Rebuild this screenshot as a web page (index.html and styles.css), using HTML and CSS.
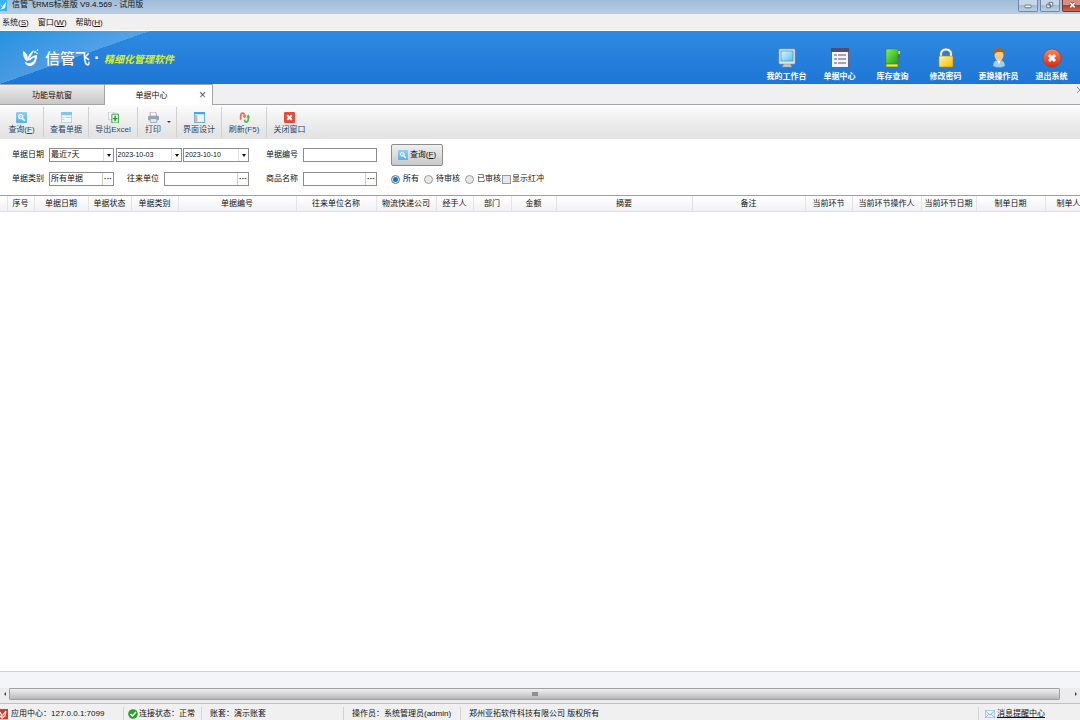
FILE: index.html
```html
<!DOCTYPE html>
<html lang="zh-CN">
<head>
    <meta charset="UTF-8">
    <meta name="viewport" content="width=device-width, initial-scale=1.0">
    <title>信管飞RMS标准版 V9.4.569 - 试用版</title>
    <link rel="stylesheet" href="styles.css">
</head>
<body>
    <svg class="defs" width="0" height="0">
        <defs>
            <linearGradient id="blue" x1="0" y1="0" x2="0" y2="1"><stop offset="0" stop-color="#8cd0f8"/><stop offset="1" stop-color="#58b0ec"/></linearGradient>
            <linearGradient id="screen" x1="0" y1="0" x2="1" y2="1"><stop offset="0" stop-color="#d4f6ff"/><stop offset="1" stop-color="#5cc0f4"/></linearGradient>
            <linearGradient id="green" x1="0" y1="0" x2="1" y2="1"><stop offset="0" stop-color="#8cf04c"/><stop offset="1" stop-color="#18a020"/></linearGradient>
            <linearGradient id="gold" x1="0" y1="0" x2="1" y2="1"><stop offset="0" stop-color="#fff6a0"/><stop offset="1" stop-color="#f8b800"/></linearGradient>
            <linearGradient id="red" x1="0" y1="0" x2="0" y2="1"><stop offset="0" stop-color="#f88860"/><stop offset="1" stop-color="#e02808"/></linearGradient>
            <symbol id="logo" viewBox="0 0 18 20">
                <path d="M1 3C4 4 5 6 6 9L5 14C2 11 1 8 1 3Z"/>
                <path d="M13 2C9 4 6 8 5 14L7 13C9 9 11 6 13 2Z"/>
                <path d="M16 7C11 8 8 10 7 13L9 13C10 11 12 10 14 10C13 14 11 16 7 16C5 16 4 15 3 14C3 17 6 19 9 19C14 18 16 13 16 7Z"/>
                <path d="M13 3h2v2h-2zM16 1h1v2h-1zM15 5h2v1h-2z"/>
            </symbol>
            <symbol id="search" viewBox="0 0 10 10">
                <rect width="10" height="10" rx="1" fill="url(#blue)"/>
                <circle cx="4.3" cy="4.2" r="1.9" fill="#9fd6f8" stroke="#fff"/>
                <path d="M5.8 5.8L8 8" stroke="#fff" stroke-width="1.4"/>
            </symbol>
        </defs>
    </svg>

    <header class="titlebar">
        <svg class="app-icon" viewBox="0 0 8 11"><path d="M0 0h7v11H0z" fill="#38b4ec"/><path d="M0 4L2 7L6 2L5 8L0 10L3 7Z" fill="#fff"/></svg>
        <span class="title">信管飞RMS标准版 V9.4.569 - 试用版</span>
        <div class="window-buttons">
            <button aria-label="最小化"><svg viewBox="0 0 20 12"><rect x="6.500" y="5.500" width="7" height="3" rx="1" fill="#fff" stroke="#58687c"/></svg></button>
            <button aria-label="还原"><svg viewBox="0 0 20 12"><path d="M9 2.500h4v4h-4zM6.500 4.500h4v4h-4z" fill="#fff" stroke="#58687c"/></svg></button>
            <button class="close" aria-label="关闭"><svg viewBox="0 0 20 12"><path d="M8 3l5 5M13 3l-5 5" stroke="#6c3030" stroke-width="3"/><path d="M8 3l5 5M13 3l-5 5" stroke="#fff" stroke-width="2"/></svg></button>
        </div>
    </header>

    <nav class="menubar">
        <a href="#">系统(<u>S</u>)</a>
        <a href="#">窗口(<u>W</u>)</a>
        <a href="#">帮助(<u>H</u>)</a>
    </nav>

    <div class="banner">
        <svg class="brand-logo" fill="#fff"><use href="#logo"/></svg>
        <span class="brand">信管飞</span>
        <span class="dot">·</span>
        <span class="slogan">精细化管理软件</span>
        <div class="shortcuts">
            <button>
                <svg viewBox="0 0 20 20"><path d="M7 16h6l2 3H5z" fill="#c8ccd0" stroke="#889098" stroke-width=".5"/><rect x="2" y="1" width="16" height="15" rx="1" fill="#e8e4dc" stroke="#a0a09c" stroke-width=".6"/><rect x="4" y="3" width="12" height="10" fill="url(#screen)" stroke="#3890c0" stroke-width=".7"/></svg>
                我的工作台
            </button>
            <button>
                <svg viewBox="0 0 20 20"><rect x="1.500" y=".5" width="17" height="19" fill="#f4f2fa" stroke="#686484"/><path d="M1 0h18v4H1z" fill="#504c70"/><path d="M4 7h3M4 11h3M4 15h3M8 7h8M8 11h8M8 15h8" stroke="#8c88a4" stroke-width="1.300"/></svg>
                单据中心
            </button>
            <button>
                <svg viewBox="0 0 20 20"><path d="M14 3h3v3h-3z" fill="#f8d020"/><path d="M14 7h3v3h-3z" fill="#e83020"/><path d="M14 11h3v4h-3z" fill="#5068c8"/><path d="M4 1h11v15H3V2z" fill="url(#green)" stroke="#189018" stroke-width=".5"/><path d="M3 16h12v3H3z" fill="#fce048" stroke="#409010" stroke-width=".7"/></svg>
                库存查询
            </button>
            <button>
                <svg viewBox="0 0 20 20"><path d="M5 10V6c0-6 10-6 10 0v4" fill="none" stroke="#6c7c94" stroke-width="3.200"/><path d="M5 10V6c0-6 10-6 10 0v4" fill="none" stroke="#f4f6f8" stroke-width="2"/><rect x="3" y="8" width="14" height="11" rx="1" fill="url(#gold)" stroke="#b88410" stroke-width=".6"/></svg>
                修改密码
            </button>
            <button>
                <svg viewBox="0 0 20 20"><path d="M4 18c0-5 3-6 6-6s6 1 6 6c-3 2-9 2-12 0z" fill="#a4ccf4" stroke="#4c80c0" stroke-width=".5"/><path d="M8 12l2 4 2-4z" fill="#fff"/><ellipse cx="10" cy="7" rx="4.500" ry="6" fill="#f8c888"/><path d="M5 7C3 2 7 0 10 0s7 2 5 7c0-3-2-3-5-3S6 5 5 7z" fill="#a86818"/></svg>
                更换操作员
            </button>
            <button>
                <svg viewBox="0 0 20 20"><circle cx="10" cy="10" r="9" fill="url(#red)" stroke="#c82810" stroke-width=".6"/><path d="M7 7l6 6M13 7l-6 6" stroke="#fff" stroke-width="3"/></svg>
                退出系统
            </button>
        </div>
    </div>

    <div class="tabs">
        <button class="tab">功能导航窗</button>
        <button class="tab active">单据中心<span class="tab-close">×</span></button>
        <button class="close-all" aria-label="关闭标签"><svg viewBox="0 0 3 6"><path d="M0 0l3 3L0 6" fill="none" stroke="#888"/></svg></button>
    </div>

    <div class="toolbar">
        <button>
            <svg><use href="#search"/></svg>
            查询(<u>F</u>)
        </button>
        <button>
            <svg viewBox="0 0 10 10"><rect x=".3" y=".3" width="9.400" height="9.400" fill="#f4fafe" stroke="#90c8ec" stroke-width=".6"/><path d="M0 0h10v3H0z" fill="#80c8f0"/><path d="M1 5h2M4 5h5M1 7h2" stroke="#a0d0ec" stroke-width=".8"/></svg>
            查看单据
        </button>
        <button class="wide">
            <svg viewBox="0 0 10 10"><path d="M.5 0h5v7h-5z" fill="#fff" stroke="#a8b8d0" stroke-width=".6"/><path d="M3.500 2h6v8h-6z" fill="#e4f8e0" stroke="#309838" stroke-width=".8"/><path d="M6.500 3.500v5M4.500 6h4" stroke="#209830" stroke-width="1.300"/></svg>
            导出Excel
        </button>
        <button class="narrow">
            <svg viewBox="0 0 10 10"><path d="M2 0h5l1 4H2z" fill="#f8f8fc" stroke="#8890a0" stroke-width=".6"/><rect y="3.500" width="10" height="4" rx="1" fill="#9ca4b4"/><path d="M2 6h6v3.500H2z" fill="#dce8f8" stroke="#8090a8" stroke-width=".6"/></svg>
            打印
            <span class="drop"></span>
        </button>
        <button>
            <svg viewBox="0 0 10 10"><rect x=".5" y=".5" width="9" height="9" fill="#e8f4fc" stroke="#70b4e8"/><path d="M0 0h10v2H0z" fill="#48a4e4"/><path d="M1 3h2v6H1z" fill="#f4b068"/></svg>
            界面设计
        </button>
        <button>
            <svg viewBox="0 0 10 10" fill="none"><path d="M1.500 7V4c0-4 3.500-3.500 3.500-1" stroke="#e87058" stroke-width="1.600"/><path d="M3 3h4L5 6z" fill="#e87058"/><path d="M8.500 4v2c0 4-3.500 4-3.500 1" stroke="#50b858" stroke-width="1.600"/><path d="M6.500 5H10L8.500 2z" fill="#50b858"/></svg>
            刷新(F5)
        </button>
        <button>
            <svg viewBox="0 0 10 10"><rect width="10" height="10" rx="1" fill="#e44c38"/><path d="M3 3l4 4M7 3L3 7" stroke="#fff" stroke-width="1.800"/></svg>
            关闭窗口
        </button>
    </div>

    <form class="filters" onsubmit="return false">
        <label for="range">单据日期</label>
        <div class="group">
            <span class="combo"><select id="range"><option>最近7天</option></select></span>
            <span class="combo date"><select aria-label="开始日期"><option>2023-10-03</option></select></span>
            <span class="combo date"><select aria-label="结束日期"><option>2023-10-10</option></select></span>
        </div>
        <label for="code">单据编号</label>
        <input class="box" type="text" id="code">
        <button class="query"><svg><use href="#search"/></svg>查询(<u>F</u>)</button>

        <label for="kind">单据类别</label>
        <div class="group">
            <span class="lookup kind"><input type="text" id="kind" value="所有单据"><button type="button" aria-label="选择类别">···</button></span>
            <label class="partner-label" for="partner">往来单位</label>
            <span class="lookup partner"><input type="text" id="partner"><button type="button" aria-label="选择单位">···</button></span>
        </div>
        <label for="goods">商品名称</label>
        <span class="lookup"><input type="text" id="goods"><button type="button" aria-label="选择商品">···</button></span>
        <div class="options">
            <label><input type="radio" name="state" checked>所有</label>
            <label><input type="radio" name="state">待审核</label>
            <label><input type="radio" name="state">已审核</label>
            <label><input type="checkbox">显示红冲</label>
        </div>
    </form>

    <main class="grid">
        <table>
            <colgroup>
                <col style="width:7px"><col style="width:27px"><col style="width:54px"><col style="width:43px"><col style="width:47px"><col style="width:118px">
                <col style="width:80px"><col style="width:60px"><col style="width:37px"><col style="width:38px"><col style="width:45px"><col style="width:136px">
                <col style="width:113px"><col style="width:47px"><col style="width:69px"><col style="width:55px"><col style="width:69px"><col style="width:47px">
            </colgroup>
            <thead>
                <tr>
                    <th></th><th>序号</th><th>单据日期</th><th>单据状态</th><th>单据类别</th><th>单据编号</th>
                    <th>往来单位名称</th><th>物流快递公司</th><th>经手人</th><th>部门</th><th>金额</th><th>摘要</th>
                    <th>备注</th><th>当前环节</th><th>当前环节操作人</th><th>当前环节日期</th><th>制单日期</th><th>制单人</th>
                </tr>
            </thead>
            <tbody></tbody>
        </table>
    </main>
    <div class="summary"></div>
    <div class="scrollbar">
        <button class="left" aria-label="向左"></button>
        <div class="thumb"><i></i></div>
        <button class="right" aria-label="向右"></button>
    </div>

    <footer class="statusbar">
        <span class="server"><svg viewBox="0 0 10 10"><path d="M0 0h8v10H0z" fill="#e03424"/><path d="M0 3l2 4 4-5-1 5-3 2-2-2" fill="none" stroke="#fff" stroke-width="1.200"/></svg>应用中心：127.0.0.1:7099</span>
        <span class="link"><svg viewBox="0 0 10 10"><circle cx="5" cy="5" r="4.800" fill="#28a028"/><path d="M2.500 5l2 2L8 3" fill="none" stroke="#fff" stroke-width="1.500"/></svg>连接状态：正常</span>
        <span class="account">账套：演示账套</span>
        <span class="operator">操作员：系统管理员(admin)</span>
        <span class="rights">郑州亚拓软件科技有限公司 版权所有</span>
        <span class="notice"><svg viewBox="0 0 10 10"><rect x=".3" y="1.300" width="9.400" height="7.400" fill="#e8f4fe" stroke="#80b4e4" stroke-width=".6"/><path d="M.5 2L5 6l4.500-4M.5 8.500L4 5M9.500 8.500L6 5" fill="none" stroke="#70a8e0" stroke-width=".7"/></svg><a href="#">消息提醒中心</a></span>
    </footer>
</body>
</html>
```
FILE: styles.css
```css
* {
    box-sizing: border-box;
}
body {
    margin: 0;
    min-height: 100vh;
    display: flex;
    flex-direction: column;
    overflow: hidden;
    background: #f0f0f0;
    color: #111;
    font-family: "Liberation Sans", "Noto Sans CJK SC", sans-serif;
    font-size: 8px;
    line-height: 12px;
    white-space: nowrap;
}
button, input, select {
    font: inherit;
    color: inherit;
    margin: 0;
    padding: 0;
    border: none;
    background: none;
    border-radius: 0;
}
a {
    color: inherit;
    text-decoration: none;
}
.defs {
    position: absolute;
}

/* title bar and menu */
.titlebar {
    display: flex;
    align-items: flex-start;
    height: 14px;
    background: linear-gradient(#a0bcd8, #b8cee4);
}
.app-icon {
    width: 8px;
    height: 11px;
}
.title {
    margin-left: 4px;
    line-height: 10px;
}
.window-buttons {
    display: flex;
    gap: 2px;
    margin-left: auto;
    margin-right: -2px;
}
.window-buttons button {
    width: 20px;
    height: 12px;
    border: 1px solid #7088a4;
    border-top: none;
    border-radius: 0 0 2px 2px;
    background: linear-gradient(#c4d6e8 45%, #a4bcd4 50%, #bcd0e4);
}
.window-buttons .close {
    border-color: #703838;
    background: linear-gradient(#d89084 45%, #b83c28 50%, #cc6850);
}
.window-buttons svg {
    display: block;
    width: 18px;
    height: 11px;
}
.menubar {
    display: flex;
    gap: 9px;
    height: 17px;
    padding: 3px 2px;
    border-bottom: 1px solid #fff;
}

/* blue banner */
.banner {
    display: flex;
    align-items: center;
    height: 53px;
    padding: 0 2px 0 22px;
    color: #fff;
    background:
        linear-gradient(to bottom right, rgba(30, 160, 220, 0.4), rgba(130, 195, 245, 0.45) 50%, transparent 50%) 0 0 / 150px 53px no-repeat,
        linear-gradient(#2e8ae2, #1e76d4);
}
.brand-logo {
    width: 17px;
    height: 19px;
}
.brand {
    margin-left: 6px;
    padding-top: 2px;
    font-size: 15px;
    line-height: 20px;
    font-weight: 500;
}
.dot {
    width: 14px;
    text-align: center;
    font-size: 16px;
    font-weight: bold;
}
.slogan {
    padding-top: 5px;
    font-size: 10px;
    font-style: italic;
    font-weight: bold;
    color: #d4f028;
}
.shortcuts {
    display: flex;
    margin-left: auto;
}
.shortcuts button {
    display: flex;
    flex-direction: column;
    align-items: center;
    width: 53px;
    padding-top: 15px;
    font-weight: bold;
}
.shortcuts svg {
    width: 20px;
    height: 20px;
    margin-bottom: 3px;
}

/* tabs */
.tabs {
    display: flex;
    height: 21px;
    border-bottom: 1px solid #a4a4a8;
}
.tab {
    width: 105px;
    height: 21px;
    padding-top: 2px;
    border: 1px solid #a4a4a8;
    border-left: none;
    background: linear-gradient(#ececec, #c8c8c8);
}
.tab.active {
    position: relative;
    width: 108px;
    padding-top: 1px;
    padding-right: 14px;
    border-bottom: none;
    background: #fff;
}
.tab-close {
    position: absolute;
    top: 4px;
    right: 6px;
    font-size: 12px;
    color: #555;
}
.close-all {
    align-self: flex-start;
    margin-left: auto;
    padding-top: 3px;
}
.close-all svg {
    display: block;
    width: 3px;
    height: 6px;
}

/* toolbar */
.toolbar {
    display: flex;
    height: 34px;
    background: linear-gradient(#fcfcfc, #e4e4e4 85%);
}
.toolbar button {
    position: relative;
    width: 45px;
    margin: 2px 0;
    padding-top: 4px;
    border-right: 1px solid #d0d0d0;
    color: #2c486c;
}
.toolbar button:first-child {
    width: 44px;
}
.toolbar button:last-child {
    border-right: none;
}
.toolbar .wide {
    width: 49px;
}
.toolbar .narrow {
    width: 39px;
    padding-right: 8px;
}
.toolbar svg {
    display: block;
    width: 11px;
    height: 11px;
    margin: 0 auto 1px;
}
.drop {
    position: absolute;
    top: 14px;
    right: 5px;
    border: 2px solid transparent;
    border-top-color: #2c3c54;
    border-bottom: none;
}

/* search form */
.filters {
    display: grid;
    grid-template-columns: 37px 200px 54px 74px 1fr;
    grid-template-rows: 24px 24px;
    align-items: center;
    height: 56px;
    padding: 4px 12px;
    background: #fff;
}
.group {
    display: flex;
    align-items: center;
    justify-content: space-between;
}
.group + label {
    padding-left: 17px;
}
.partner-label {
    padding-left: 8px;
}
.combo {
    position: relative;
    display: flex;
    width: 65px;
}
.date {
    width: 66px;
    font-size: 7px;
}
.combo select, .box, .lookup {
    width: 100%;
    height: 14px;
    border: 1px solid #8c8c8c;
    background: #fff;
}
.combo select {
    appearance: none;
    padding-left: 1px;
}
.combo::after {
    content: "";
    position: absolute;
    top: 6px;
    right: 3px;
    border: 2px solid transparent;
    border-top: 3px solid #111;
    border-bottom: none;
}
.combo::before {
    content: "";
    position: absolute;
    top: 1px;
    right: 10px;
    height: 12px;
    border-left: 1px solid #ddd;
}
.lookup {
    display: flex;
}
.lookup.kind {
    width: 65px;
}
.lookup.partner {
    width: 85px;
}
.lookup input {
    flex: 1;
    min-width: 0;
    padding-left: 1px;
}
.lookup button {
    width: 11px;
    border-left: 1px solid #ccc;
    font-weight: bold;
    line-height: 10px;
}
.query {
    display: flex;
    align-items: center;
    justify-content: center;
    width: 52px;
    height: 22px;
    margin-left: 14px;
    border: 1px solid #8c8c8c;
    border-radius: 2px;
    background: linear-gradient(#f0f0f0, #c8c8c8);
}
.query svg {
    width: 10px;
    height: 10px;
    margin-right: 2px;
}
.options {
    display: flex;
    gap: 5px;
    margin-left: 14px;
}
.options label {
    display: flex;
    align-items: center;
    gap: 3px;
}
.options label:last-child {
    gap: 1px;
    margin-left: -4px;
}
.options input {
    appearance: none;
    width: 9px;
    height: 9px;
    border: 1px solid #999;
    background: #e8e8e8;
}
.options input[type="radio"] {
    border-radius: 50%;
}
.options input:checked {
    border-color: #607890;
    background: radial-gradient(#1478b8 0 2px, #dceaf4 3px);
}

/* data grid */
.grid {
    flex: 1;
    overflow: hidden;
    border-top: 1px solid #a0a0a0;
    background: #fff;
}
table {
    width: 1092px;
    table-layout: fixed;
    border-collapse: collapse;
}
th {
    height: 15px;
    padding: 2px 0 0;
    border-right: 1px solid #e4e4e8;
    border-bottom: 1px solid #dedee2;
    background: linear-gradient(#fff, #f0f1f4);
    font-weight: normal;
}
.summary {
    height: 17px;
    border-top: 1px solid #d0d0d4;
    background: #f4f5f8;
}
.scrollbar {
    display: flex;
    height: 15px;
    padding: 0 0 3px;
    background: #ececec;
}
.scrollbar button {
    display: flex;
    align-items: center;
    justify-content: center;
    width: 9px;
}
.scrollbar .right {
    width: 20px;
    padding-left: 12px;
}
.scrollbar button::before {
    content: "";
    border: 2px solid transparent;
}
.scrollbar .left::before {
    border-right-color: #444;
    border-left: none;
}
.scrollbar .right::before {
    border-left-color: #444;
    border-right: none;
}
.thumb {
    flex: 1;
    display: flex;
    align-items: center;
    justify-content: center;
    border: 1px solid #a0a0a4;
    border-radius: 1px;
    background: linear-gradient(#f0f0f0, #b8b8bc);
}
.thumb i {
    width: 6px;
    height: 4px;
    background: #909094;
}

/* status bar */
.statusbar {
    display: flex;
    height: 17px;
    padding-top: 3px;
    border-top: 1px solid #c0c0c4;
    background: #f0f0f0;
}
.statusbar span {
    display: flex;
    align-items: center;
    height: 13px;
    padding-left: 8px;
    border-left: 1px solid #d4d4d4;
}
.statusbar svg {
    width: 10px;
    height: 10px;
    margin-right: 1px;
}
.statusbar .server {
    width: 123px;
    padding-left: 0;
    border-left: none;
}
.statusbar .link {
    width: 78px;
    padding-left: 4px;
}
.account {
    width: 142px;
}
.operator {
    width: 117px;
}
.statusbar .notice {
    width: 102px;
    margin-left: auto;
    padding-left: 6px;
}
.notice svg {
    margin-right: 2px;
}
.notice a {
    text-decoration: underline;
}
```
